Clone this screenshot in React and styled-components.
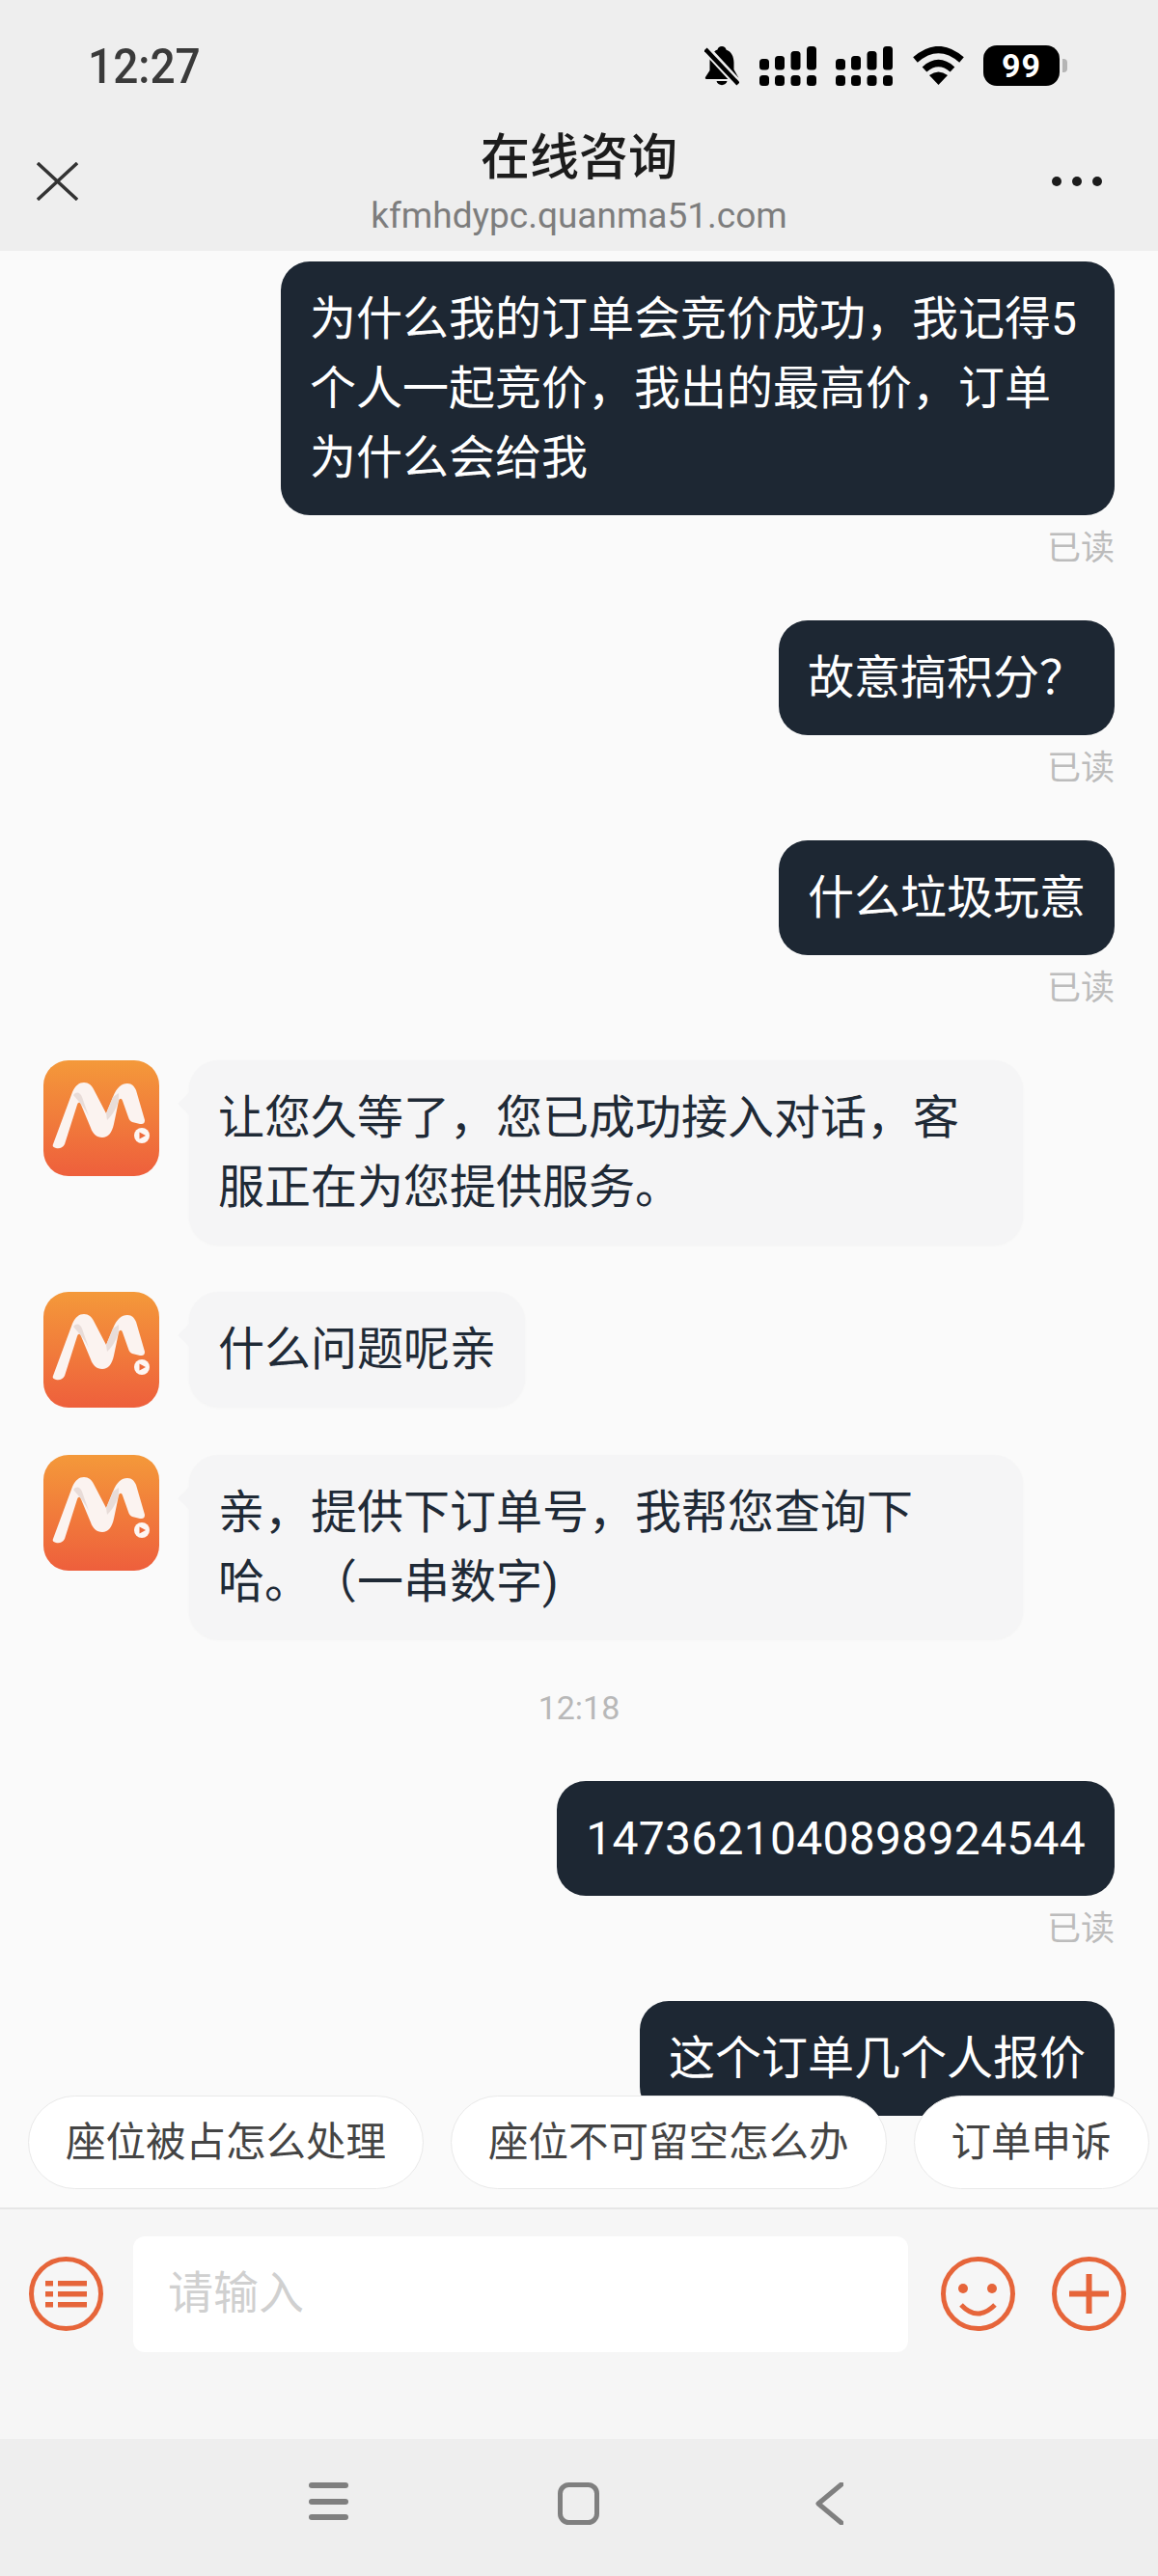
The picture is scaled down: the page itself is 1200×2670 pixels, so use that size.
import React from 'react'
import styled, { createGlobalStyle } from 'styled-components'

const FONT = `Roboto, "Noto Sans CJK SC", sans-serif`

const messages = [
  { id: 1, side: 'right', text: '为什么我的订单会竞价成功，我记得5个人一起竞价，我出的最高价，订单为什么会给我', read: true },
  { id: 2, side: 'right', text: '故意搞积分？', read: true },
  { id: 3, side: 'right', text: '什么垃圾玩意', read: true },
  { id: 4, side: 'left', text: '让您久等了，您已成功接入对话，客服正在为您提供服务。' },
  { id: 5, side: 'left', text: '什么问题呢亲' },
  { id: 6, side: 'left', text: '亲，提供下订单号，我帮您查询下哈。（一串数字)' },
  { id: 7, side: 'time', text: '12:18' },
  { id: 8, side: 'right', text: '1473621040898924544', read: true, digits: true },
  { id: 9, side: 'right', text: '这个订单几个人报价' },
]

const quickReplies = ['座位被占怎么处理', '座位不可留空怎么办', '订单申诉']

function App() {
  return (
    <Page>
      <GlobalStyle />
      <Header>
        <StatusBar>
          <Clock>12:27</Clock>
          <StatusIcons>
            <BellOffIcon />
            <SignalIcon />
            <SignalIcon />
            <WifiIcon />
            <Battery>
              <BatteryBody>99</BatteryBody>
              <BatteryNub />
            </Battery>
          </StatusIcons>
        </StatusBar>
        <NavBar>
          <CloseButton>
            <svg width="43" height="40" viewBox="0 0 43 40" fill="none" stroke="#333" strokeWidth="3.4">
              <path d="M1 1 L42 39 M42 1 L1 39" />
            </svg>
          </CloseButton>
          <TitleBlock>
            <Title>在线咨询</Title>
            <Url>kfmhdypc.quanma51.com</Url>
          </TitleBlock>
          <MoreButton>
            <MoreDot />
            <MoreDot />
            <MoreDot />
          </MoreButton>
        </NavBar>
      </Header>

      <Chat>
        <MessageList>
          {messages.map((m) => {
            if (m.side === 'time') return <TimeLabel key={m.id}>{m.text}</TimeLabel>
            if (m.side === 'left') {
              return (
                <LeftRow key={m.id}>
                  <AppLogo />
                  <LeftBubble>{m.text}</LeftBubble>
                </LeftRow>
              )
            }
            return (
              <RightRow key={m.id}>
                <RightBubble $digits={m.digits}>{m.text}</RightBubble>
                {m.read && <ReadMark>已读</ReadMark>}
              </RightRow>
            )
          })}
        </MessageList>
        <QuickRow>
          {quickReplies.map((q) => (
            <Chip key={q}>{q}</Chip>
          ))}
        </QuickRow>
      </Chat>

      <InputBar>
        <RoundIcon $left>
          <svg width="77" height="77" viewBox="0 0 77 77" fill="none">
            <circle cx="38.5" cy="38.5" r="36" stroke="#e6653a" strokeWidth="5" />
            <g fill="#e6653a">
              <rect x="17" y="25" width="8" height="5.5" />
              <rect x="30" y="25" width="30" height="5.5" />
              <rect x="17" y="36" width="8" height="5.5" />
              <rect x="30" y="36" width="30" height="5.5" />
              <rect x="17" y="47" width="8" height="5.5" />
              <rect x="30" y="47" width="30" height="5.5" />
            </g>
          </svg>
        </RoundIcon>
        <InputBox>请输入</InputBox>
        <RoundIcon>
          <svg width="77" height="77" viewBox="0 0 77 77" fill="none">
            <circle cx="38.5" cy="38.5" r="36" stroke="#e6653a" strokeWidth="5" />
            <circle cx="23" cy="33" r="5" fill="#e6653a" />
            <circle cx="53" cy="33" r="5" fill="#e6653a" />
            <path d="M21 50 Q38 68 56 50" stroke="#e6653a" strokeWidth="5" />
          </svg>
        </RoundIcon>
        <RoundIcon>
          <svg width="77" height="77" viewBox="0 0 77 77" fill="none">
            <circle cx="38.5" cy="38.5" r="36" stroke="#e6653a" strokeWidth="5" />
            <path d="M18 38.5 H59 M38.5 18 V59" stroke="#e6653a" strokeWidth="6" />
          </svg>
        </RoundIcon>
      </InputBar>

      <NavKeys>
        <svg width="41" height="40" viewBox="0 0 41 40" fill="#7f7f7f">
          <rect x="0" y="0" width="41" height="6" rx="3" />
          <rect x="0" y="17" width="41" height="6" rx="3" />
          <rect x="0" y="33" width="41" height="6" rx="3" />
        </svg>
        <svg width="43" height="44" viewBox="0 0 43 44" fill="none">
          <rect x="2.5" y="2.5" width="38" height="39" rx="9" stroke="#7f7f7f" strokeWidth="5" />
        </svg>
        <svg width="36" height="44" viewBox="-7 0 36 44" fill="none">
          <path d="M27 2 L3 22 L27 42" stroke="#7f7f7f" strokeWidth="5" strokeLinecap="round" strokeLinejoin="round" />
        </svg>
      </NavKeys>
    </Page>
  )
}

function BellOffIcon() {
  return (
    <svg width="36" height="41" viewBox="0 0 36 41">
      <path d="M18 0 C20.5 0 22 1.5 22.5 3.5 C28 5.5 30.5 11 30.5 17 L30.5 24 L35 32 C35.5 33.5 35 34 33 34 L3 34 C1 34 .5 33.5 1 32 L5.5 25 L5.5 16 C5.5 10 8.5 5.5 13.5 3.5 C14 1.5 15.5 0 18 0 Z" fill="#000" />
      <path d="M12.5 36 H23.5 C22.5 41.5 13.5 41.5 12.5 36 Z" fill="#000" />
      <path d="M0 1 L36 40" stroke="#eeeeee" strokeWidth="9" />
      <path d="M1 3 L35 39" stroke="#000" strokeWidth="4.5" />
    </svg>
  )
}

function SignalIcon() {
  return (
    <svg width="59" height="41" viewBox="0 0 59 41" fill="#000">
      <rect x="0" y="13" width="10" height="11.5" rx="3.5" />
      <rect x="16" y="10" width="10" height="14.5" rx="3.5" />
      <rect x="32.5" y="5" width="10" height="19.5" rx="3.5" />
      <rect x="49" y="0" width="10" height="24.5" rx="3.5" />
      <rect x="0" y="30" width="10" height="11" rx="3.5" />
      <rect x="16" y="30" width="10" height="11" rx="3.5" />
      <rect x="32.5" y="30" width="10" height="11" rx="3.5" />
      <rect x="49" y="30" width="10" height="11" rx="3.5" />
    </svg>
  )
}

function WifiIcon() {
  return (
    <svg width="53" height="40" viewBox="0 0 53 40" fill="none">
      <path d="M2.5 14 Q26.5 -7 50.5 14" stroke="#000" strokeWidth="7" />
      <path d="M12 24 Q26.5 11 41 24" stroke="#000" strokeWidth="7" />
      <path d="M17 30 Q26.5 23 36 30 L26.5 40 Z" fill="#000" />
    </svg>
  )
}

function AppLogo() {
  return (
    <Logo>
      <svg width="120" height="120" viewBox="0 0 120 120">
        <path
          d="M10 87 L30 33 C33 26 37 23 42 23 C47 23 50 26 52 30 L65 55 L72 38 C76 28 81 24 87 24 C92 24 94 27 96 31 L105 62 C105 66 103 66 100 66 L92 64 C90 63 89 62 88 59 L82 42 C81 39 79 39 78 42 L73 66 C71 75 67 80 61 80 C55 80 51 76 49 70 L39 46 C38 43 36 43 35 46 L22 87 C20 91 16 92 13 91 C10 90 9 89 10 87 Z"
          fill="#fbf3f0"
        />
        <path d="M31 36 C34 32 38 33 40 38 L47 58 C43 50 38 44 31 36 Z" fill="#e8dcd8" />
        <path d="M78 34 C79 44 74 54 66 62 L65 55 L72 38 Z" fill="#e8dcd8" />
        <circle cx="102" cy="78" r="8" fill="#fdf6f3" />
        <path d="M99.5 74.5 L106 78 L99.5 81.5 Z" fill="#ee6a3a" />
      </svg>
    </Logo>
  )
}

const GlobalStyle = createGlobalStyle`
  html, body {
    margin: 0;
    padding: 0;
    background: #fafafa;
  }
  * {
    box-sizing: border-box;
  }
`

const Page = styled.div`
  width: 1200px;
  height: 2670px;
  display: flex;
  flex-direction: column;
  overflow: hidden;
  font-family: ${FONT};
`

const Header = styled.header`
  flex: none;
  height: 260px;
  background: #eeeeee;
`

const StatusBar = styled.div`
  height: 136px;
  padding: 0 94px 0 91px;
  display: flex;
  align-items: center;
  justify-content: space-between;
`

const Clock = styled.span`
  display: inline-block;
  font-size: 46px;
  font-weight: 500;
  color: #3a3a3a;
  transform: scaleY(1.1);
`

const StatusIcons = styled.div`
  display: flex;
  align-items: center;
  gap: 20.5px;
`

const Battery = styled.div`
  display: flex;
  align-items: center;
  gap: 3px;
`

const BatteryBody = styled.div`
  width: 79px;
  height: 42px;
  border-radius: 14px;
  background: #000;
  color: #fff;
  font-size: 34px;
  font-weight: 700;
  letter-spacing: 1px;
  display: flex;
  align-items: center;
  justify-content: center;
`

const BatteryNub = styled.div`
  width: 5px;
  height: 14px;
  border-radius: 0 4px 4px 0;
  background: #b5b5b5;
`

const NavBar = styled.div`
  height: 124px;
  padding: 0 58px;
  display: grid;
  grid-template-columns: 1fr auto 1fr;
`

const CloseButton = styled.div`
  margin-left: -20px;
  padding-top: 32px;
  line-height: 0;
`

const TitleBlock = styled.div`
  text-align: center;
`

const Title = styled.div`
  font-size: 51px;
  line-height: 56px;
  color: #1c1c1c;
  font-weight: 500;
`

const Url = styled.div`
  font-size: 37px;
  line-height: 48px;
  margin-top: 8px;
  color: #7d7d7d;
`

const MoreButton = styled.div`
  padding-top: 47px;
  display: flex;
  justify-content: flex-end;
  gap: 11px;
`

const MoreDot = styled.span`
  width: 10px;
  height: 10px;
  border-radius: 50%;
  background: #1c1c1c;
`

const Chat = styled.main`
  position: relative;
  flex: none;
  height: 2028px;
  background: #fafafa;
`

const MessageList = styled.div`
  height: 1934px;
  padding: 11px 45px 0;
  overflow: hidden;
`

const Bubble = styled.div`
  max-width: 864px;
  padding: 23.5px 30px;
  border-radius: 30px;
  font-size: 48px;
  line-height: 72px;
  text-spacing-trim: space-all;
`

const RightRow = styled.div`
  display: flex;
  flex-direction: column;
  align-items: flex-end;
`

const RightBubble = styled(Bubble)`
  background: #1d2733;
  color: #fff;
  letter-spacing: ${(p) => (p.$digits ? '0.27px' : '0')};
`

const ReadMark = styled.div`
  font-size: 35px;
  line-height: 70px;
  margin-bottom: 39px;
  color: #bcbcbc;
`

const LeftRow = styled.div`
  display: flex;
  align-items: flex-start;
  gap: 31px;
  margin-bottom: 49px;
`

const LeftBubble = styled(Bubble)`
  position: relative;
  background: #f5f5f6;
  color: #1f2a36;
  box-shadow: 0 1px 3px rgba(0, 0, 0, 0.03);

  &::before {
    content: '';
    position: absolute;
    left: -12px;
    top: 33px;
    border-style: solid;
    border-width: 12px 12px 12px 0;
    border-color: transparent #f5f5f6 transparent transparent;
  }
`

const Logo = styled.div`
  flex: none;
  width: 120px;
  height: 120px;
  border-radius: 26px;
  line-height: 0;
  background: linear-gradient(180deg, #f4993a 0%, #ee5f3c 100%);
`

const TimeLabel = styled.div`
  text-align: center;
  font-size: 34px;
  line-height: 50px;
  margin: -3px 0 51px;
  color: #b8b8b8;
`

const QuickRow = styled.div`
  position: absolute;
  left: 0;
  right: 0;
  bottom: 19px;
  padding-left: 29px;
  display: flex;
  gap: 28px;
  overflow: hidden;
`

const Chip = styled.div`
  flex: none;
  height: 97px;
  padding: 0 38px;
  border: 1px solid #e9e9e9;
  border-radius: 49px;
  background: #fff;
  color: #444;
  font-size: 41.5px;
  line-height: 95px;
`

const InputBar = styled.div`
  flex: none;
  height: 240px;
  padding: 28px 34px 0 30px;
  border-top: 2px solid #e6e6e6;
  background: #f6f6f6;
  display: flex;
  align-items: flex-start;
  gap: 38px;
`

const RoundIcon = styled.div`
  flex: none;
  margin-top: 21px;
  margin-right: ${(p) => (p.$left ? '-7px' : '0')};
  line-height: 0;
`

const InputBox = styled.div`
  flex: none;
  width: 803px;
  height: 120px;
  margin-right: -4px;
  padding-left: 36px;
  border-radius: 12px;
  background: #fff;
  color: #d0d0d0;
  font-size: 47px;
  line-height: 118px;
`

const NavKeys = styled.div`
  flex: 1;
  padding: 45px 326px 0 320px;
  background: #eeeeee;
  display: flex;
  align-items: flex-start;
  justify-content: space-between;
`

export default App
